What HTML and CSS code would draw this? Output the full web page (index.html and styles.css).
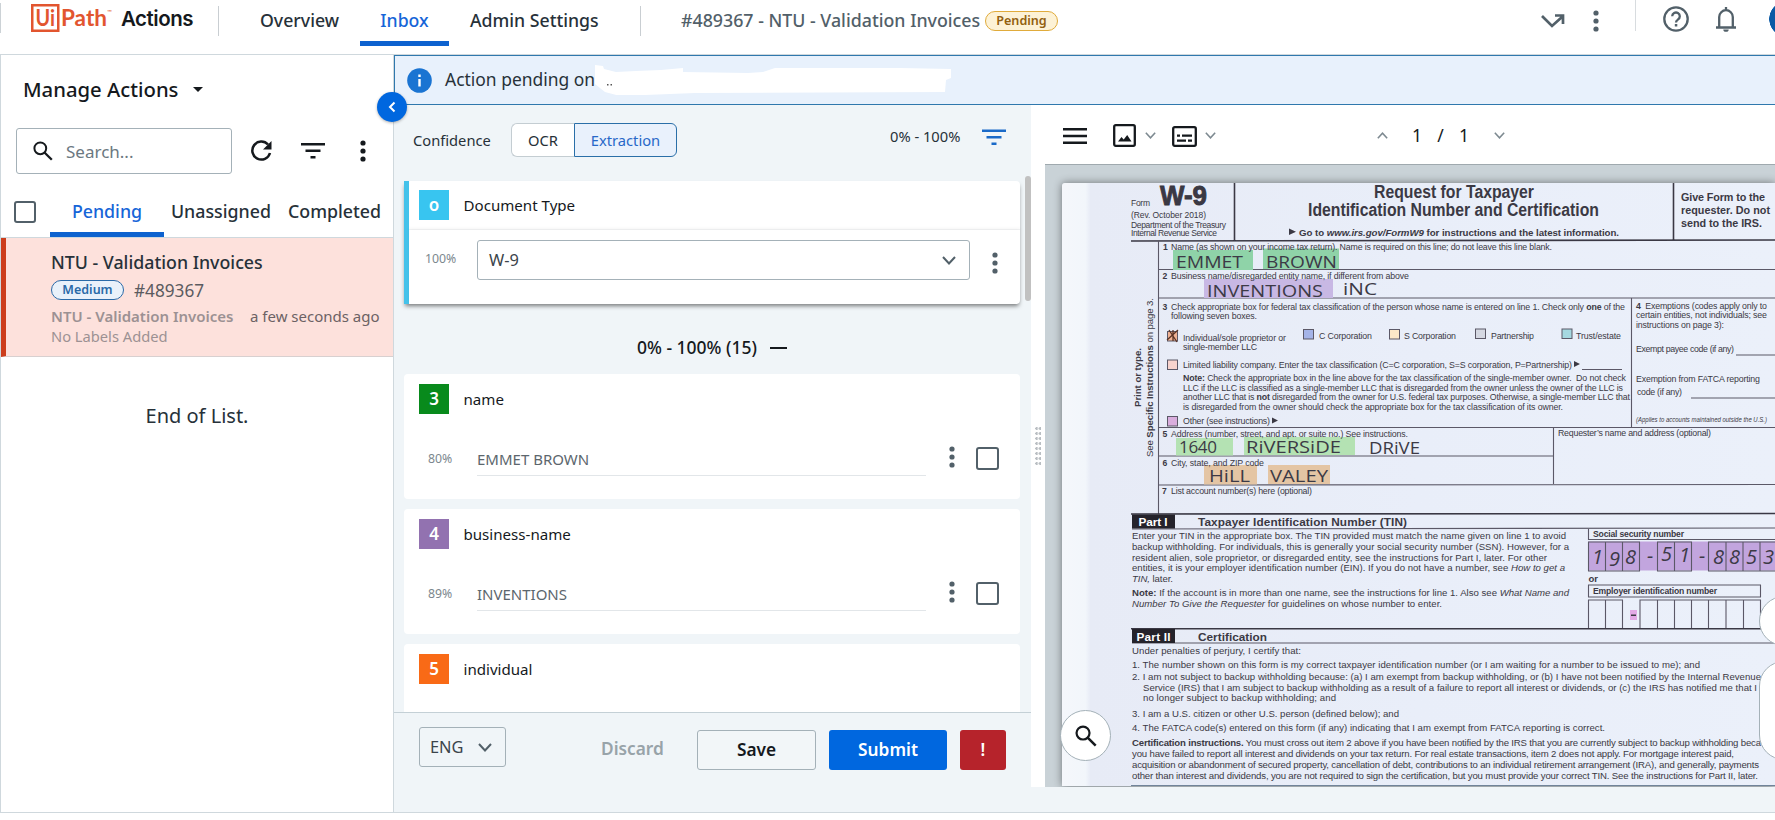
FILE: index.html
```html
<!DOCTYPE html>
<html lang="en">
<head>
<meta charset="utf-8">
<title>UiPath Actions</title>
<link rel="stylesheet" href="styles.css">
</head>
<body>
<svg class="defs" width="0" height="0" aria-hidden="true">
  <symbol id="dots" viewBox="0 0 6 22"><circle cx="3" cy="3" r="2.6"/><circle cx="3" cy="11" r="2.6"/><circle cx="3" cy="19" r="2.6"/></symbol>
  <symbol id="filter" viewBox="0 0 24 16"><path d="M0 0h24v2.600H0zM4.500 6.500h15v2.600h-15zM9.500 13h5v2.600h-5z"/></symbol>
  <symbol id="chev" viewBox="0 0 14 9"><path d="M1 1l6 6.500L13 1" fill="none" stroke="currentColor" stroke-width="2"/></symbol>
  <symbol id="glass" viewBox="0 0 20 20"><circle cx="7.300" cy="7.300" r="5.900" fill="none" stroke="currentColor" stroke-width="2"/><path d="M11.500 11.500l7.300 7.300" stroke="currentColor" stroke-width="2.300"/></symbol>
</svg>

<header class="top">
  <svg class="logo" width="82" height="32" viewBox="0 0 82 32">
    <rect x="1.250" y="5.250" width="26" height="25.500" fill="none" stroke="#e2552f" stroke-width="2.500"/>
    <text x="4.500" y="26" textLength="19.500" lengthAdjust="spacingAndGlyphs" class="logo-ui">Ui</text>
    <text x="30" y="26" textLength="46" lengthAdjust="spacingAndGlyphs" class="logo-path">Path</text>
    <text x="76" y="14" class="logo-tm">™</text>
  </svg>
  <span class="product">Actions</span>
  <i class="rule"></i>
  <nav class="nav">
    <a class="nav-item">Overview</a>
    <a class="nav-item on">Inbox</a>
    <a class="nav-item">Admin Settings</a>
  </nav>
  <i class="rule rule2"></i>
  <span class="crumb">#489367 - NTU - Validation Invoices</span>
  <span class="pill pill-pending">Pending</span>
  <div class="top-icons">
    <svg width="24" height="14" viewBox="0 0 24 14" class="i-arrow"><path d="M1 2l10 10L21 3M14 1.500h8v8.500" fill="none" stroke="currentColor" stroke-width="2.700"/></svg>
    <svg width="6" height="22" class="i-more"><use href="#dots"/></svg>
    <i class="rule3"></i>
    <svg width="26" height="26" viewBox="0 0 26 26" class="i-help"><circle cx="13" cy="13" r="11.700" fill="none" stroke="currentColor" stroke-width="2.300"/><path d="M9.200 10.300a3.800 3.800 0 1 1 5.700 3.300q-1.900 1.200-1.900 3" fill="none" stroke="currentColor" stroke-width="2.300"/><rect x="11.800" y="18" width="2.500" height="2.500"/></svg>
    <svg width="22" height="26" viewBox="0 0 22 26" class="i-bell"><path d="M1 21.500h20M4.200 21V11a6.800 6.800 0 0 1 13.600 0v10M11 4.500V1" fill="none" stroke="currentColor" stroke-width="2.300"/><path d="M8.300 23.500h5.400a2.700 2.300 0 0 1-5.400 0z"/></svg>
    <i class="avatar"></i>
  </div>
</header>

<div class="body">
  <aside class="side">
    <div class="manage">Manage Actions <i class="tri"></i></div>
    <div class="tools">
      <div class="search"><svg width="20" height="20"><use href="#glass"/></svg><span>Search...</span></div>
      <svg width="22" height="22" viewBox="0 0 22 22" class="t-refresh"><path d="M18 4.500A9 9 0 1 0 20 13" fill="none" stroke="currentColor" stroke-width="2.500"/><path d="M21.500 1v8.500H13z"/></svg>
      <svg width="24" height="16" class="t-filter"><use href="#filter"/></svg>
      <svg width="6" height="22" class="t-more"><use href="#dots"/></svg>
    </div>
    <div class="tabs">
      <i class="box"></i>
      <span class="tab tab-a on">Pending</span>
      <span class="tab tab-b">Unassigned</span>
      <span class="tab tab-c">Completed</span>
    </div>
    <article class="item">
      <div class="item-title">NTU - Validation Invoices</div>
      <div class="item-row"><span class="pill pill-medium">Medium</span><span class="item-id">#489367</span></div>
      <div class="item-meta"><b>NTU - Validation Invoices</b><span>a few seconds ago</span></div>
      <div class="item-labels">No Labels Added</div>
    </article>
    <div class="end">End of List.</div>
  </aside>

  <main class="main">
    <button class="collapse"><svg width="8" height="12" viewBox="0 0 8 12"><path d="M6.500 1.500L2 6l4.500 4.500" fill="none" stroke="#fff" stroke-width="2"/></svg></button>
    <div class="banner">
      <svg width="25" height="25" viewBox="0 0 25 25"><circle cx="12.500" cy="12.500" r="12.300" fill="#1a74d2"/><path d="M11.300 11h2.400v7.500h-2.400zM11.300 6.500h2.400V9h-2.400z" fill="#fff"/></svg>
      <span class="banner-text">Action pending on</span>
      <svg width="358" height="30" viewBox="0 0 358 30" class="smudge"><path d="M0 0l8 1 1 3 12 3 20-1 25-1 22-2v4l65 1 15-1 12-4h125l51 1v9l-5 2-1 12-250 1-25 1-50 2-15-4-10-8z" fill="#fff"/><path d="M12 19h1.500v1.500H12zM15.500 19H17v1.500h-1.500z" fill="#555"/></svg>
    </div>

    <div class="work">
      <section class="fields">
        <div class="conf">
          <span class="conf-label">Confidence</span>
          <span class="seg seg-l">OCR</span><span class="seg seg-r">Extraction</span>
          <span class="range">0% - 100%</span>
          <svg width="24" height="17" class="conf-filter"><use href="#filter"/></svg>
        </div>
        <div class="list">
          <i class="thumb"></i>
          <div class="card doc-type">
            <div class="card-head"><i class="badge c0">o</i>Document Type</div>
            <div class="card-body">
              <span class="pct">100%</span>
              <div class="select"><span>W-9</span><svg width="14" height="9"><use href="#chev"/></svg></div>
              <svg width="6" height="22" class="c-more"><use href="#dots"/></svg>
            </div>
          </div>
          <div class="group">0% - 100% (15)<i class="minus"></i></div>
          <div class="card field">
            <div class="card-head"><i class="badge c3">3</i>name</div>
            <div class="field-row"><span class="pct">80%</span><span class="value">EMMET BROWN</span><svg width="6" height="22"><use href="#dots"/></svg><i class="box"></i></div>
          </div>
          <div class="card field">
            <div class="card-head"><i class="badge c4">4</i>business-name</div>
            <div class="field-row"><span class="pct">89%</span><span class="value">INVENTIONS</span><svg width="6" height="22"><use href="#dots"/></svg><i class="box"></i></div>
          </div>
          <div class="card field">
            <div class="card-head"><i class="badge c5">5</i>individual</div>
          </div>
        </div>
        <footer class="actions">
          <div class="lang"><span>ENG</span><svg width="14" height="9"><use href="#chev"/></svg></div>
          <span class="discard">Discard</span>
          <button class="btn save">Save</button>
          <button class="btn submit">Submit</button>
          <button class="btn warn">!</button>
        </footer>
      </section>

      <div class="grip"><i></i></div>

      <section class="viewer">
        <div class="bar">
          <svg width="24" height="16" viewBox="0 0 24 16"><path d="M0 0h24v2.500H0zM0 6.700h24v2.500H0zM0 13.500h24V16H0z"/></svg>
          <svg width="23" height="23" viewBox="0 0 23 23" class="b-img"><rect x="1.200" y="1.200" width="20.600" height="20.600" rx="1.500" fill="none" stroke="currentColor" stroke-width="2.300"/><path d="M5 17.500l3.500-4.500 2.200 2.500 3.500-4.500 4.300 6.500z"/></svg>
          <svg width="11" height="7" class="b-chev"><use href="#chev"/></svg>
          <svg width="25" height="21" viewBox="0 0 25 21" class="b-card"><rect x="1.200" y="1.200" width="22.600" height="18.600" rx="1.500" fill="none" stroke="currentColor" stroke-width="2.300"/><path d="M5 8.500h3v2.200H5zM10 8.500h10v2.200H10zM5 13.500h9v2.200H5zM16 13.500h4v2.200h-4z"/></svg>
          <svg width="11" height="7" class="b-chev b-chev2"><use href="#chev"/></svg>
          <svg width="11" height="7" class="b-up"><use href="#chev"/></svg>
          <span class="pages"><span>1</span><span>/</span><span>1</span></span>
          <svg width="11" height="7" class="b-chev b-down"><use href="#chev"/></svg>
        </div>
        <div class="stage">
          <svg class="sheet" width="713" height="603" viewBox="1062 183 713 603">
            <defs><linearGradient id="edge"><stop offset="0" stop-color="#f5f7fb"/><stop offset=".033" stop-color="#f2f6fb"/><stop offset=".04" stop-color="#e7ebf6"/><stop offset=".5" stop-color="#e9eef9"/><stop offset="1" stop-color="#ebf0fa"/></linearGradient></defs>
            <rect x="1062" y="183" width="713" height="603" fill="url(#edge)"/>
            <g class="ink-lines">
              <path class="h2" d="M1131 241L1775 240M1234.500 183V241M1673.500 183V240"/>
              <path d="M1158.500 241V514M1158 269.500H1775M1158 298H1775M1158 427.500H1775M1631.500 298V427M1553.500 427V484M1158 456H1553M1158 485L1775 484.500M1582 369.500H1622M1736 355H1775M1691 398H1775"/>
              <path class="h2" d="M1131 514L1775 513.500M1131 628.700H1775"/>
              <path d="M1132 529L1775 528M1132 643H1775M1588.500 528V539.500H1775"/>
            </g>

            <g class="s8">
              <text x="1131" y="206" textLength="19">Form</text>
              <text x="1131" y="218" textLength="75">(Rev. October 2018)</text>
              <text x="1131" y="228" textLength="95">Department of the Treasury</text>
              <text x="1131" y="236" textLength="86">Internal Revenue Service</text>
            </g>
            <text x="1160" y="205" textLength="47" lengthAdjust="spacingAndGlyphs" class="w9">W-9</text>
            <text x="1374" y="198" textLength="160" lengthAdjust="spacingAndGlyphs" class="ttl">Request for Taxpayer</text>
            <text x="1308" y="215.500" textLength="291" lengthAdjust="spacingAndGlyphs" class="ttl">Identification Number and Certification</text>
            <path d="M1289 228.500l7 3.200-7 3.200zM1574 361l6 3-6 3zM1272 417.500l6 3-6 3z"/>
            <text x="1299" y="235.500" textLength="320" class="b9">Go to <tspan class="it">www.irs.gov/FormW9</tspan> for instructions and the latest information.</text>
            <g class="b10">
              <text x="1681" y="201" textLength="84">Give Form to the</text>
              <text x="1681" y="213.500" textLength="89">requester. Do not</text>
              <text x="1681" y="226.500" textLength="81">send to the IRS.</text>
            </g>

            <g class="b8">
              <text x="1163" y="249.500">1</text><text x="1162.500" y="279">2</text><text x="1162.500" y="309.500">3</text>
              <text x="1162.500" y="436.500">5</text><text x="1162.500" y="465.500">6</text><text x="1162" y="494">7</text>
            </g>

            <rect x="1173" y="250" width="80" height="20" fill="#8fd3a8"/><rect x="1263" y="248.500" width="76" height="20.500" fill="#8fd3a8"/>
            <rect x="1204" y="279" width="129" height="19" fill="#c8b8e4"/>
            <rect x="1176" y="438" width="57" height="17.500" fill="#b4e2b3"/><rect x="1244" y="437" width="111" height="18" fill="#b4e2b3"/>
            <rect x="1204" y="465" width="53" height="19.500" fill="#e4c5a4"/><rect x="1268" y="465" width="62" height="19" fill="#e4c5a4"/>
            <rect x="1588" y="541.500" width="187" height="29" fill="#c2a5de"/>
            <rect x="1630" y="610" width="7" height="10" fill="#e3a9e6"/><path d="M1631 614.500h5v1.500h-5z"/>

            <g class="s85">
              <text x="1171" y="249.500" textLength="381">Name (as shown on your income tax return). Name is required on this line; do not leave this line blank.</text>
              <text x="1171" y="279" textLength="238">Business name/disregarded entity name, if different from above</text>
              <text x="1171" y="309.500" textLength="454">Check appropriate box for federal tax classification of the person whose name is entered on line 1. Check only <tspan class="bd">one</tspan> of the</text>
              <text x="1171" y="319" textLength="86">following seven boxes.</text>
              <text x="1183" y="340.500" textLength="103">Individual/sole proprietor or</text>
              <text x="1183" y="350" textLength="74">single-member LLC</text>
              <text x="1319" y="339" textLength="53">C Corporation</text>
              <text x="1404" y="339" textLength="52">S Corporation</text>
              <text x="1491" y="339" textLength="43">Partnership</text>
              <text x="1576" y="339" textLength="45">Trust/estate</text>
              <text x="1183" y="368" textLength="389">Limited liability company. Enter the tax classification (C=C corporation, S=S corporation, P=Partnership)</text>
              <text x="1183" y="381" textLength="443"><tspan class="bd">Note:</tspan> Check the appropriate box in the line above for the tax classification of the single-member owner.&#160; Do not check</text>
              <text x="1183" y="390.500" textLength="440">LLC if the LLC is classified as a single-member LLC that is disregarded from the owner unless the owner of the LLC is</text>
              <text x="1183" y="400" textLength="447">another LLC that is <tspan class="bd">not</tspan> disregarded from the owner for U.S. federal tax purposes. Otherwise, a single-member LLC that</text>
              <text x="1183" y="410" textLength="380">is disregarded from the owner should check the appropriate box for the tax classification of its owner.</text>
              <text x="1183" y="424" textLength="87">Other (see instructions)</text>
              <text x="1636" y="309" textLength="131"><tspan class="bd">4</tspan>&#160; Exemptions (codes apply only to</text>
              <text x="1636" y="318" textLength="131">certain entities, not individuals; see</text>
              <text x="1636" y="327.500" textLength="88">instructions on page 3):</text>
              <text x="1636" y="352" textLength="98">Exempt payee code (if any)</text>
              <text x="1636" y="382" textLength="124">Exemption from FATCA reporting</text>
              <text x="1637" y="395" textLength="45">code (if any)</text>
              <text x="1171" y="436.500" textLength="237">Address (number, street, and apt. or suite no.) See instructions.</text>
              <text x="1558" y="435.500" textLength="153">Requester’s name and address (optional)</text>
              <text x="1171" y="465.500" textLength="93">City, state, and ZIP code</text>
              <text x="1171" y="494" textLength="141">List account number(s) here (optional)</text>
            </g>
            <text x="1636" y="421.500" textLength="131" lengthAdjust="spacingAndGlyphs" class="tiny">(Applies to accounts maintained outside the U.S.)</text>
            <text class="b9" transform="translate(1141 407) rotate(-90)" textLength="59">Print or type.</text>
            <text class="s9" transform="translate(1152.500 457) rotate(-90)" textLength="159">See <tspan class="bd">Specific Instructions</tspan> on page 3.</text>

            <g class="tick">
              <rect x="1167.500" y="331.500" width="10" height="9.500" fill="#f0b294"/><rect x="1303.500" y="329.500" width="10" height="9.500" fill="#a5b4e8"/>
              <rect x="1389.500" y="329.500" width="10" height="9.500" fill="#fbe8c8"/><rect x="1475.500" y="329" width="10" height="9.500" fill="#d5d8e2"/>
              <rect x="1562" y="329" width="10" height="9.500" fill="#a5d8e0"/><rect x="1167.500" y="360" width="10" height="9.500" fill="#f8d3cd"/>
              <rect x="1167.500" y="416.500" width="10" height="9.500" fill="#d9addd"/>
              <path d="M1169 330l8 12M1178 330l-11 10M1173 330v11" stroke="#5a3325" stroke-width="1.300"/>
            </g>

            <g class="hand">
              <text x="1176" y="267.500" textLength="67" lengthAdjust="spacingAndGlyphs">EMMET</text><text x="1266" y="267.500" textLength="71" lengthAdjust="spacingAndGlyphs">BROWN</text>
              <text x="1207" y="296.500" textLength="116" lengthAdjust="spacingAndGlyphs">INVENTIONS</text><text x="1343" y="295" textLength="34" lengthAdjust="spacingAndGlyphs">iNC</text>
              <text x="1179" y="453" textLength="38">1640</text><text x="1246" y="453" textLength="95" lengthAdjust="spacingAndGlyphs">RiVERSiDE</text><text x="1369" y="453.500" textLength="51" lengthAdjust="spacingAndGlyphs">DRiVE</text>
              <text x="1209" y="482" textLength="41" lengthAdjust="spacingAndGlyphs">HiLL</text><text x="1270" y="482" textLength="58" lengthAdjust="spacingAndGlyphs">VALEY</text>
            </g>

            <rect x="1132" y="514.500" width="43" height="14" fill="#25232b"/><rect x="1132" y="629" width="43" height="14" fill="#25232b"/>
            <text x="1138.500" y="525.500" textLength="29" class="part w">Part I</text><text x="1136.500" y="640.500" textLength="34" class="part w">Part II</text>
            <text x="1198" y="525.500" textLength="209" class="part">Taxpayer Identification Number (TIN)</text>
            <text x="1198" y="640.500" textLength="69" class="part">Certification</text>

            <g class="s9">
              <text x="1132" y="539" textLength="434">Enter your TIN in the appropriate box. The TIN provided must match the name given on line 1 to avoid</text>
              <text x="1132" y="550" textLength="437">backup withholding. For individuals, this is generally your social security number (SSN). However, for a</text>
              <text x="1132" y="560.500" textLength="415">resident alien, sole proprietor, or disregarded entity, see the instructions for Part I, later. For other</text>
              <text x="1132" y="571" textLength="433">entities, it is your employer identification number (EIN). If you do not have a number, see <tspan class="it">How to get a</tspan></text>
              <text x="1132" y="582" textLength="41"><tspan class="it">TIN,</tspan> later.</text>
              <text x="1132" y="596" textLength="437"><tspan class="bd">Note:</tspan> If the account is in more than one name, see the instructions for line 1. Also see <tspan class="it">What Name and</tspan></text>
              <text x="1132" y="607" textLength="310"><tspan class="it">Number To Give the Requester</tspan> for guidelines on whose number to enter.</text>
              <text x="1132" y="654" textLength="169">Under penalties of perjury, I certify that:</text>
              <text x="1132" y="668" textLength="568">1. The number shown on this form is my correct taxpayer identification number (or I am waiting for a number to be issued to me); and</text>
              <text x="1132" y="680" textLength="629">2. I am not subject to backup withholding because: (a) I am exempt from backup withholding, or (b) I have not been notified by the Internal Revenue</text>
              <text x="1143" y="690.500" textLength="614">Service (IRS) that I am subject to backup withholding as a result of a failure to report all interest or dividends, or (c) the IRS has notified me that I</text>
              <text x="1143" y="701" textLength="193">no longer subject to backup withholding; and</text>
              <text x="1132" y="717" textLength="267">3. I am a U.S. citizen or other U.S. person (defined below); and</text>
              <text x="1132" y="731" textLength="473">4. The FATCA code(s) entered on this form (if any) indicating that I am exempt from FATCA reporting is correct.</text>
              <text x="1132" y="746" textLength="629"><tspan class="bd">Certification instructions.</tspan> You must cross out item 2 above if you have been notified by the IRS that you are currently subject to backup withholding beca</text>
              <text x="1132" y="757" textLength="602">you have failed to report all interest and dividends on your tax return. For real estate transactions, item 2 does not apply. For mortgage interest paid,</text>
              <text x="1132" y="767.500" textLength="627">acquisition or abandonment of secured property, cancellation of debt, contributions to an individual retirement arrangement (IRA), and generally, payments</text>
              <text x="1132" y="778.500" textLength="626">other than interest and dividends, you are not required to sign the certification, but you must provide your correct TIN. See the instructions for Part II, later.</text>
            </g>

            <g class="b8">
              <text x="1593" y="536.500" textLength="91">Social security number</text>
              <text x="1588.500" y="582" class="or">or</text>
              <text x="1593" y="593.500" textLength="124">Employer identification number</text>
            </g>
            <g class="cells">
              <path d="M1588.500 542h51v29h-51zM1605.500 542v29M1622.500 542v29M1657.500 542h34v29h-34zM1674.500 542v29M1708.500 542h68v29h-68zM1726 542v29M1743 542v29M1760 542v29"/>
              <path d="M1588.500 585h172v12h-172zM1588.500 628v-28h34v28M1605.500 600v28M1640 628v-28h120.500v28M1657.500 600v28M1674.500 600v28M1691.500 600v28M1708.500 600v28M1726 600v28M1743.500 600v28"/>
            </g>
            <g class="hand digits">
              <text x="1592" y="564">1</text><text x="1609" y="566">9</text><text x="1625" y="564">8</text><text x="1647" y="563">-</text><text x="1661" y="561">5</text><text x="1679" y="562">1</text><text x="1699" y="563">-</text><text x="1713" y="564">8</text><text x="1729" y="564">8</text><text x="1746" y="564">5</text><text x="1763" y="564">3</text>
            </g>
            <path d="M1131 785.500H1775" stroke="#71849a" stroke-width="1"/>
          </svg>
          <button class="float f-zoom"><svg width="22" height="22" viewBox="0 0 20 20"><use href="#glass"/></svg></button>
          <i class="float f-round"></i>
          <i class="float f-tall"></i>
        </div>
      </section>
    </div>
  </main>
</div>
</body>
</html>
```
FILE: styles.css
```css
* { box-sizing: border-box; }
body { margin: 0; width: 1775px; height: 820px; overflow: hidden; background: #fff; color: #273139; font-family: "Noto Sans", "Open Sans", sans-serif; white-space: nowrap; }
i { font-style: normal; display: block; flex: none; }
svg { display: block; flex: none; fill: currentColor; }
button { font-family: inherit; padding: 0; }
.defs { position: absolute; }

.top { height: 54px; display: flex; align-items: flex-start; padding-left: 31px; background: linear-gradient(#ccd2d6, #ccd2d6) 0 3px / 1px 30px no-repeat; }
.logo { font-family: Lato, sans-serif; }
.logo-ui, .logo-path { fill: #e2552f; font-size: 22px; font-weight: 700; }
.logo-tm { fill: #e2552f; font-size: 6px; }
.product { width: 96px; padding-left: 8px; font: 600 20.500px/38px Inter, sans-serif; letter-spacing: -.5px; color: #15191d; }
.rule { width: 1px; height: 30px; margin: 6px 0 0 9px; background: #c9ced2; }
.nav { display: flex; margin-left: 24px; }
.nav-item { width: 184px; height: 46px; padding: 0 17px; font-size: 17.700px; font-weight: 500; line-height: 41px; border-bottom: 5px solid transparent; margin-right: 3px; }
.nav-item:first-child { width: 114px; }
.nav-item.on { width: 89px; margin-right: 4px; padding: 0; text-align: center; color: #1665d8; border-color: #0d62cf; }
.rule2 { margin-left: 0; }
.crumb { width: 344px; padding-left: 40px; font-size: 17.800px; font-weight: 500; line-height: 41px; color: #526069; }
.pill { display: block; border-radius: 11px; font-weight: 600; text-align: center; }
.pill-pending { width: 73px; height: 20px; margin-top: 11px; border: 1px solid #e0ab3b; background: #fdf2d6; color: #92600f; font-size: 12.600px; line-height: 18px; }
.top-icons { display: flex; margin-left: auto; color: #526069; }
.i-arrow { margin: 14px 0 0; }
.i-more { margin: 10px 0 0 28px; }
.rule3 { width: 1px; height: 31px; margin-left: 36px; background: #d8dcdf; }
.i-help { margin: 6px 0 0 27px; }
.i-bell { margin: 6px 0 0 26px; }
.avatar { width: 6px; height: 36px; margin-left: 32px; background: radial-gradient(circle at 18px 19px, #0a5aa5 17.500px, transparent 18px); }

.body { display: flex; height: 759px; border-top: 1px solid #cfd8dd; border-bottom: 1px solid #cfd8dd; }
.side { width: 394px; flex: none; border-left: 1px solid #cfd8dd; border-right: 1px solid #cfd8dd; background: #fff; }
.manage { display: flex; align-items: center; height: 67px; padding-left: 22px; font-size: 20.300px; font-weight: 500; color: #15191d; }
.tri { margin: 2px 0 0 15px; border: 5px solid transparent; border-top-color: #15191d; border-bottom: 0; }
.tools { display: flex; align-items: center; height: 46px; margin-top: 6px; padding-left: 15px; color: #15191d; }
.search { display: flex; align-items: center; width: 216px; height: 46px; padding-left: 16px; border: 1px solid #a4b1b8; border-radius: 3px; }
.search span { margin-left: 13px; font-size: 17px; color: #6b7881; }
.t-refresh { margin-left: 18px; }
.t-filter { margin-left: 29px; }
.t-more { margin-left: 35px; }
.tabs { display: flex; align-items: flex-start; height: 64px; border-bottom: 1px solid #cfd8dd; }
.box { width: 23px; height: 23px; border: 2px solid #526069; border-radius: 3px; background: #fff; }
.tabs .box { margin: 27px 0 0 13px; width: 22px; height: 22px; }
.tab { height: 63px; padding-top: 26px; line-height: 22px; font-size: 17.800px; font-weight: 500; }
.tab-a { width: 114px; margin-left: 14px; text-align: center; }
.tab.on { color: #1665d8; border-bottom: 5px solid #0d62cf; }
.tab-b { margin-left: 7px; width: 117px; }
.item { height: 119px; padding: 17px 0 0 45px; border-left: 5px solid #cc3d1c; border-bottom: 1px solid #d8d0d0; background: #fde1dc; }
.item-title { font-size: 17.800px; font-weight: 500; line-height: 14px; }
.item-row { display: flex; align-items: center; height: 22px; margin-top: 10px; }
.pill-medium { width: 73px; height: 20px; border: 1px solid #2a6aa8; background: #e9f1fa; color: #2a6aa8; font-size: 12.500px; line-height: 17px; }
.item-id { margin-left: 10px; font-size: 17.200px; color: #5b5b60; }
.item-meta { display: flex; margin-top: 5px; font-size: 15px; line-height: 20px; color: #6c6264; }
.item-meta b { width: 199px; font-weight: 600; color: #9c9193; }
.item-labels { font-size: 14.700px; line-height: 20px; color: #9c9193; }
.end { margin-top: 46px; text-align: center; font-size: 20px; line-height: 26px; }

.main { flex: 1; min-width: 0; display: flex; flex-direction: column; position: relative; background: #f0f5f8; }
.collapse { position: absolute; left: -17px; top: 37px; width: 30px; height: 30px; border: 0; border-radius: 50%; background: #0067df; display: flex; align-items: center; justify-content: center; box-shadow: 0 1px 3px rgba(0,0,0,.3); }
.banner { display: flex; align-items: center; height: 50px; padding-left: 12px; border: 1px solid #2f78ad; border-right: 0; background: #e8f1fc; }
.banner-text { width: 151px; margin: -2px 0 0 13px; font-size: 17.450px; }
.smudge { margin-left: -1px; }
.work { display: flex; height: 682px; }
.fields { width: 637px; flex: none; display: flex; flex-direction: column; }
.conf { display: flex; align-items: center; height: 71px; padding: 0 0 1px 19px; font-size: 14.700px; }
.conf-label { width: 98px; }
.seg { height: 34px; line-height: 32px; text-align: center; border: 1px solid #c4cdd2; background: #fff; }
.seg-l { width: 63px; border-right: 0; border-radius: 6px 0 0 6px; }
.seg-r { width: 103px; border-color: #2a6fa8; border-radius: 0 6px 6px 0; background: #e9f1fc; color: #2868c8; }
.range { width: 92px; margin: -8px 0 0 213px; }
.conf-filter { margin-top: -5px; color: #1a6ac8; }
.list { position: relative; height: 536px; overflow: hidden; padding: 5px 0 0 10px; }
.thumb { position: absolute; right: 0; top: 0; width: 6px; height: 125px; border-radius: 3px; background: #c1c1c1; }
.card { width: 616px; background: #fff; border-radius: 4px; margin-bottom: 10px; }
.card-head { display: flex; align-items: center; height: 49px; padding-left: 15px; font-size: 15.100px; color: #15191d; }
.badge { width: 30px; height: 30px; margin-right: 14.500px; text-align: center; font-size: 17px; font-weight: 600; line-height: 29px; color: #fff; }
.c0 { background: #38c5f0; } .c3 { background: #088a1c; } .c4 { background: #9272b0; } .c5 { background: #f96a16; }
.doc-type { border-left: 5px solid #44c2ea; border-radius: 0 4px 4px 0; box-shadow: 0 3px 4px -1px rgba(0,0,0,.5); }
.doc-type .card-head { padding-left: 10px; border-bottom: 1px solid #f4f5f6; }
.card-body { display: flex; align-items: flex-start; height: 74px; padding-top: 10px; box-shadow: 0 -2px 3px rgba(0,0,0,.04); }
.pct { width: 59px; font-size: 12.300px; color: #7c878e; }
.card-body .pct { width: 68px; padding-left: 16px; line-height: 37px; }
.select, .lang { display: flex; align-items: center; justify-content: space-between; height: 40px; border: 1px solid #a4b1b8; border-radius: 3px; color: #526069; }
.select { width: 493px; padding: 0 13px 0 11px; background: #fff; }
.select span, .lang span { font-size: 16.400px; line-height: 36px; color: #3b444b; }
.c-more { margin: 12px 0 0 22px; color: #526069; }
.group { display: flex; align-items: center; justify-content: center; height: 60px; padding-top: 5px; margin-left: -6px; font-size: 17.500px; font-weight: 500; color: #15191d; }
.minus { width: 17px; height: 2px; margin: 2px 0 0 13px; background: #15191d; }
.group { padding-right: 11px; margin-left: 0; }
.field { height: 125px; }
.field .card-head { height: 49px; }
.field-row { display: flex; align-items: flex-start; height: 53px; padding: 24px 0 0 24px; color: #526069; }
.field-row .pct { width: 49px; line-height: 24px; }
.field-row .value { width: 449px; height: 29px; font-size: 15px; line-height: 24px; border-bottom: 1px solid #e2e6e9; color: #5c666d; flex: none; }
.field-row svg { margin: -1px 0 0 23px; }
.field-row .box { margin-left: 21px; }
.actions { display: flex; align-items: flex-start; height: 75px; padding: 17px 0 0 25px; border-top: 1px solid #c4d0d6; font-size: 17.300px; }
.lang { width: 87px; margin-top: -3px; padding: 0 13px 0 10px; }
.discard { width: 191px; padding-left: 95px; line-height: 38px; font-weight: 600; color: #98a3a9; }
.btn { height: 40px; border: 0; border-radius: 3px; font-size: 17.300px; font-weight: 600; line-height: 36px; }
.save { width: 119px; border: 1px solid #a4b1b8; background: #f2f6f8; color: #15191d; }
.submit { width: 118px; margin-left: 13px; background: #0067df; color: #fff; }
.warn { width: 46px; margin-left: 13px; background: #b6232b; color: #fff; }

.grip { width: 14px; flex: none; background: #fff; padding: 322px 0 0 4px; }
.grip i { width: 6px; height: 39px; background: radial-gradient(circle at 1.500px 1.500px, #b9bec2 1.300px, transparent 1.500px) 0 0 / 3.500px 5px; }
.viewer { flex: 1; min-width: 0; display: flex; flex-direction: column; }
.bar { display: flex; align-items: center; height: 60px; padding: 2px 0 0 18px; border-bottom: 1px solid #9fa9ae; background: #fff; color: #15191d; }
.b-img { margin-left: 26px; }
.b-chev, .b-up { color: #7d8990; }
.b-chev { margin-left: 9px; }
.b-card { margin: 1px 0 0 16px; }
.b-chev2 { margin-left: 8px; }
.b-up { margin-left: 161px; transform: rotate(180deg); }
.pages { display: flex; justify-content: space-between; width: 57px; margin: -2px 0 0 24px; font-size: 17.500px; }
.b-down { margin-left: 25px; }
.stage { position: relative; flex: 1; padding: 18px 0 0 17px; background: #c9d2d7; overflow: hidden; }
.sheet { box-shadow: 0 0 8px rgba(0,0,0,.45); fill: #3b3944; font-family: "Liberation Sans", Arial, sans-serif; border-radius: 3px 0 0 0; }
.ink-lines path, .cells path { fill: none; stroke: #5b5867; stroke-width: 1.100; }
.ink-lines .h2 { stroke: #3a3844; stroke-width: 1.600; }
.sheet .s8 { font-size: 8.500px; } .s85 { font-size: 8.800px; } .s9 { font-size: 9.600px; }
.b8, .b9, .b10, .part, .ttl, .w9, .bd { font-weight: 700; }
.b8 { font-size: 8.600px; } .b9 { font-size: 9.700px; } .b10 { font-size: 10.800px; } .or { font-size: 9.500px; }
.it { font-style: italic; }
.ttl { font-size: 17.500px; }
.w9 { font-size: 28px; stroke: #37353f; stroke-width: .9px; }
.tiny { font-size: 6.500px; font-style: italic; }
.part { font-size: 11.800px; } .part.w { fill: #fff; }
.tick rect { stroke: #5b5867; stroke-width: 1; }
.hand { font-family: "Open Sans", sans-serif; font-size: 17px; font-weight: 400; fill: #3c3a46; }
.digits { font-size: 20px; font-style: italic; }
.float { position: absolute; background: #fff; border: 1px solid #a4b1b8; }
.f-zoom { left: 15px; top: 545px; width: 51px; height: 51px; border-radius: 50%; display: flex; align-items: center; justify-content: center; color: #15191d; }
.f-round { left: 714px; top: 431px; width: 50px; height: 50px; border-radius: 50%; }
.f-tall { left: 714px; top: 496px; width: 50px; height: 99px; border-radius: 25px; }
```
